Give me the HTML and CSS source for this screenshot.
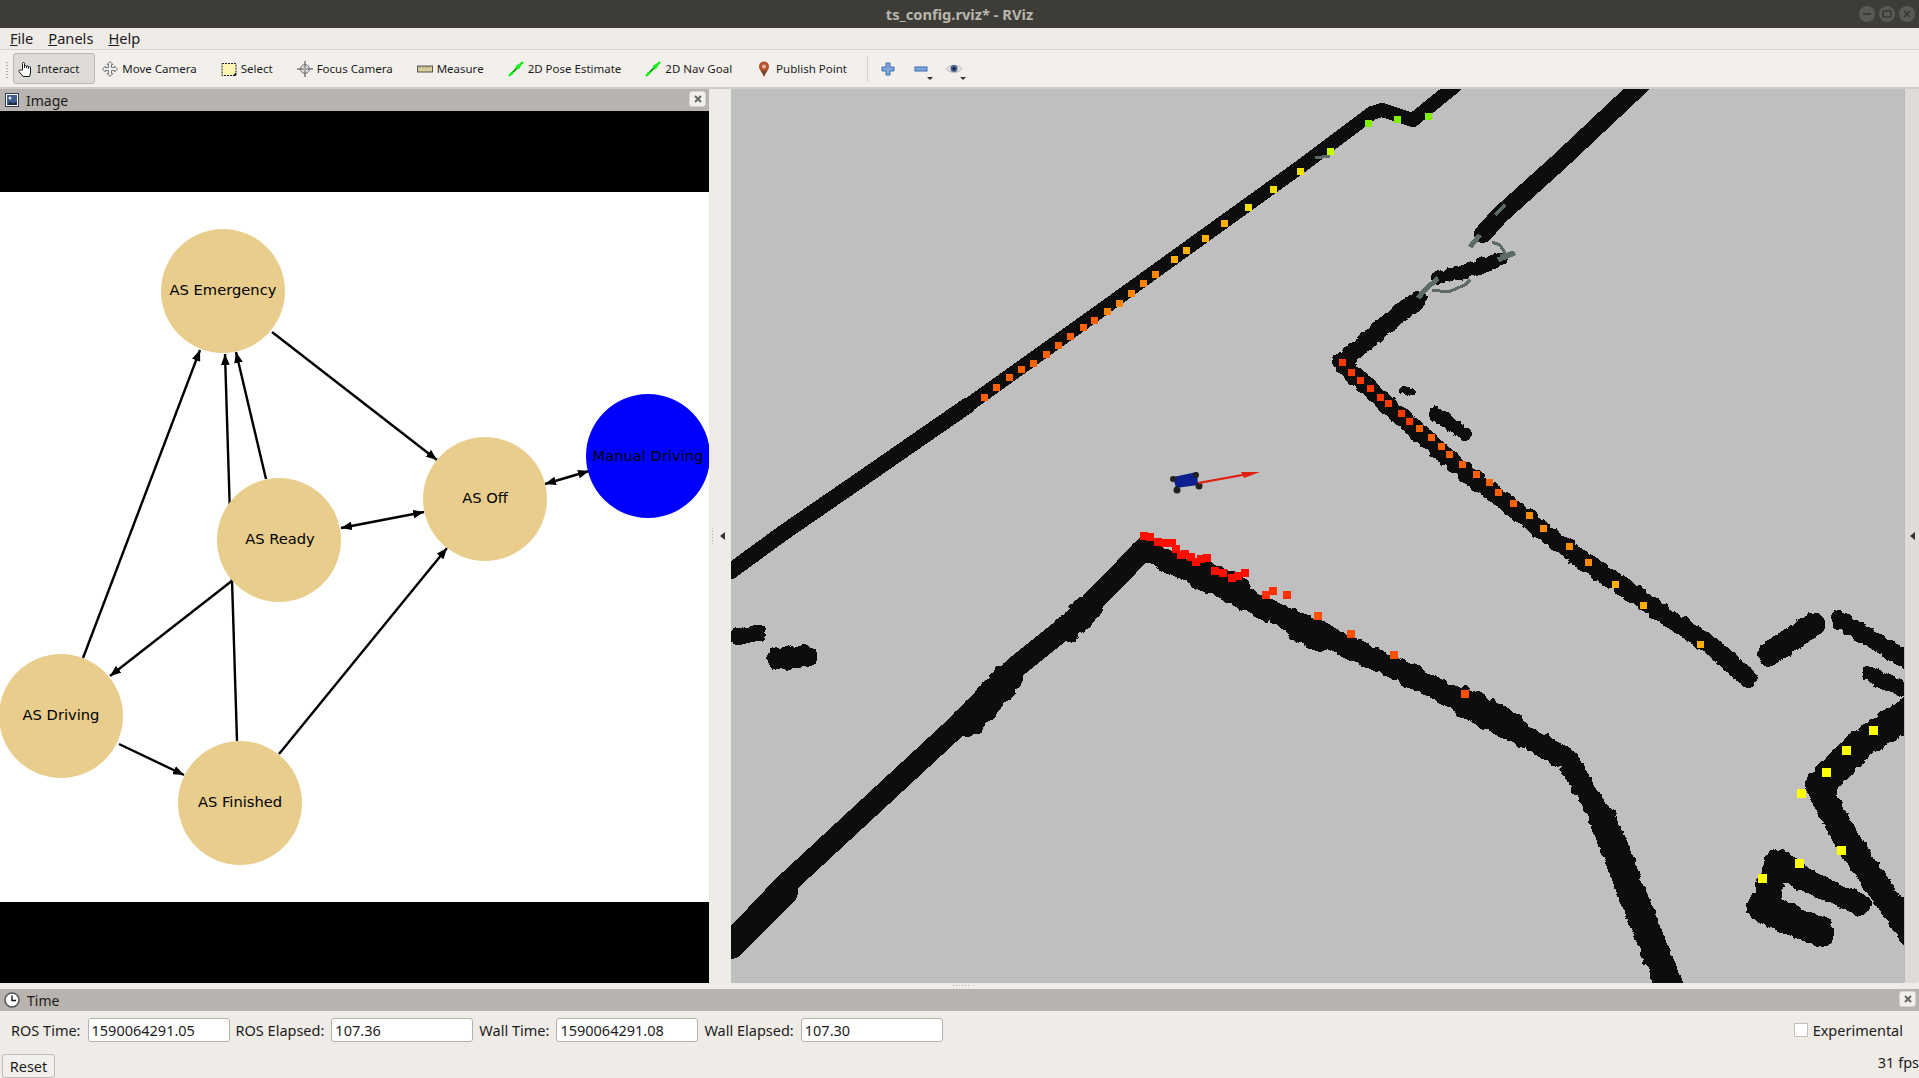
FILE: index.html
```html
<!DOCTYPE html>
<html>

<head>
    <title>ts_config.rviz* - RViz</title>
    <link rel="stylesheet" href="styles.css">
</head>

<body>

    <div class="titlebar">
        <span class="title-text">ts_config.rviz* - RViz</span>
        <div class="win-buttons">
            <svg class="win-btn" viewBox="0 0 16 16"><circle cx="8" cy="8" r="8" fill="#5a5955"/><path d="M4 8h8" stroke="#33322e" stroke-width="1.4"/></svg>
            <svg class="win-btn" viewBox="0 0 16 16"><circle cx="8" cy="8" r="8" fill="#5a5955"/><rect x="4" y="5" width="8" height="6" fill="none" stroke="#33322e" stroke-width="1.2"/></svg>
            <svg class="win-btn" viewBox="0 0 16 16"><circle cx="8" cy="8" r="8" fill="#5a5955"/><path d="M5 5l6 6M11 5l-6 6" stroke="#33322e" stroke-width="1.3"/></svg>
        </div>
    </div>

    <div class="menubar">
        <span class="menu-item"><u>F</u>ile</span>
        <span class="menu-item"><u>P</u>anels</span>
        <span class="menu-item"><u>H</u>elp</span>
    </div>

    <div class="toolbar">
        <div class="grip"></div>
        <div class="tool active">
            <svg class="icon" viewBox="0 0 16 16"><path d="M4.500 9V2.500a1 1 0 0 1 2 0V7 5.500a1 1 0 0 1 2 0V7 6a1 1 0 0 1 2 0v1.500-.8a1 1 0 0 1 2 0V12l-1 3.500H5L1 10.500c-.7-1 .8-2.200 1.800-1.200z" fill="#fff" stroke="#1a1a1a" stroke-width="1"/></svg>
            <span>Interact</span>
        </div>
        <div class="tool">
            <svg class="icon" viewBox="0 0 16 16"><path d="M8 .5l3 3H9.500v3h3V5l3 3-3 3V9.500h-3v3H11l-3 3-3-3h1.500v-3h-3V11l-3-3 3-3v1.500h3v-3H5z" fill="#eee" stroke="#777" stroke-width="1"/></svg>
            <span>Move Camera</span>
        </div>
        <div class="tool">
            <svg class="icon" viewBox="0 0 16 16"><rect x="1" y="2.500" width="14" height="12" fill="#fbf6b4" stroke="#222" stroke-dasharray="2 1"/><path d="M12 14.500l3-3v3z" fill="#000"/></svg>
            <span>Select</span>
        </div>
        <div class="tool">
            <svg class="icon" viewBox="0 0 16 16"><circle cx="8" cy="8" r="4.500" fill="#ddd" stroke="#777"/><path d="M8 0v16M0 8h16" stroke="#777" stroke-width="1.500"/><path d="M8 5v6M5 8h6" stroke="#bbb"/></svg>
            <span>Focus Camera</span>
        </div>
        <div class="tool">
            <svg class="icon" viewBox="0 0 16 16"><rect x=".5" y="5" width="15" height="6" fill="#d8cc9a" stroke="#555"/><path d="M3 5v2M6 5v2M9 5v2M12 5v2" stroke="#777"/></svg>
            <span>Measure</span>
        </div>
        <div class="tool">
            <svg class="icon" viewBox="0 0 16 16"><path d="M1 15L15 1" stroke="#00e000" stroke-width="2"/><path d="M15 .5L7.500 5l3.500 3.500z" fill="#19f019"/><path d="M1 15l4-1.500-2.500-2.500z" fill="#19f019"/><path d="M5 11l4-4" stroke="#116611" stroke-width="1"/></svg>
            <span>2D Pose Estimate</span>
        </div>
        <div class="tool">
            <svg class="icon" viewBox="0 0 16 16"><path d="M1 15L15 1" stroke="#00e000" stroke-width="2"/><path d="M15 .5L7.500 5l3.500 3.500z" fill="#19f019"/><path d="M1 15l4-1.500-2.500-2.500z" fill="#19f019"/><path d="M5 11l4-4" stroke="#116611" stroke-width="1"/></svg>
            <span>2D Nav Goal</span>
        </div>
        <div class="tool">
            <svg class="icon" viewBox="0 0 16 16"><path d="M8 16C6 11 3 9 3 5.500a5 5 0 0 1 10 0C13 9 10 11 8 16z" fill="#b5502c"/><path d="M8 15.500c-1-3-2-4-3-6h6c-1 2-2 3-3 6z" fill="#6d4a32"/><circle cx="8" cy="5.500" r="2" fill="#e8b9a0"/></svg>
            <span>Publish Point</span>
        </div>
        <div class="tool-sep"></div>
        <div class="tool-mini">
            <svg class="icon" viewBox="0 0 16 16"><path d="M6 2h4v4h4v4h-4v4H6v-4H2V6h4z" fill="#7fa6d8" stroke="#3c6eb0"/></svg>
        </div>
        <div class="tool-mini">
            <svg class="icon" viewBox="0 0 16 16"><rect x="2" y="6" width="12" height="4" fill="#7fa6d8" stroke="#3c6eb0"/></svg>
            <span class="drop"></span>
        </div>
        <div class="tool-mini">
            <svg class="icon" viewBox="0 0 16 16"><path d="M0 8c4-5 12-5 16 0-4 4.500-12 4.500-16 0z" fill="#e4e4e4" stroke="#aaa" stroke-width=".8"/><circle cx="8" cy="7.500" r="3.500" fill="#4a5f8e"/><circle cx="8" cy="7.500" r="1.500" fill="#14203e"/></svg>
            <span class="drop"></span>
        </div>
    </div>

    <div class="main">
        <div class="panel-left">
            <div class="dock-title">
                <svg class="icon-title" viewBox="0 0 14 14"><rect x=".5" y=".5" width="13" height="13" fill="#fff" stroke="#2e3b5e"/><rect x="2" y="2" width="10" height="10" fill="#3e5c8c"/><circle cx="5" cy="5" r="1.500" fill="#e6e6d0"/><path d="M2 12l3-3 3 1 4-1v3z" fill="#1e2a44"/></svg>
                <span class="dock-name">Image</span>
                <span class="dock-close"><svg viewBox="0 0 8 8"><path d="M1 1l6 6M7 1l-6 6" stroke="#666" stroke-width="2"/></svg></span>
            </div>
            <div class="image-view">
                <svg class="graph" viewBox="0 192 709 710">
                    <defs>
                        <marker id="head" viewBox="0 0 10 8" refX="10" refY="4" markerWidth="11" markerHeight="9" markerUnits="userSpaceOnUse" orient="auto-start-reverse">
                            <path d="M0 0L10 4L0 8z" fill="#000"/>
                        </marker>
                    </defs>
                    <g class="edges">
                        <line x1="272" y1="332" x2="437" y2="460" marker-end="url(#head)"/>
                        <line x1="266" y1="479" x2="236" y2="352" marker-end="url(#head)"/>
                        <line x1="237" y1="741" x2="225" y2="354" marker-end="url(#head)"/>
                        <line x1="83" y1="658" x2="200" y2="350" marker-end="url(#head)"/>
                        <line x1="341" y1="528" x2="424" y2="512" marker-start="url(#head)" marker-end="url(#head)"/>
                        <line x1="545" y1="484" x2="589" y2="471" marker-start="url(#head)" marker-end="url(#head)"/>
                        <line x1="233" y1="580" x2="110" y2="676" marker-end="url(#head)"/>
                        <line x1="119" y1="744" x2="184" y2="775" marker-end="url(#head)"/>
                        <line x1="279" y1="754" x2="447" y2="548" marker-end="url(#head)"/>
                    </g>
                    <circle class="node" cx="223" cy="291" r="62"/>
                    <circle class="node" cx="485" cy="499" r="62"/>
                    <circle class="node-on" cx="648" cy="456" r="62"/>
                    <circle class="node" cx="279" cy="540" r="62"/>
                    <circle class="node" cx="61" cy="716" r="62"/>
                    <circle class="node" cx="240" cy="803" r="62"/>
                    <text class="label" x="223" y="289">AS Emergency</text>
                    <text class="label" x="485" y="497">AS Off</text>
                    <text class="label" x="648" y="455">Manual Driving</text>
                    <text class="label" x="280" y="538">AS Ready</text>
                    <text class="label" x="61" y="714">AS Driving</text>
                    <text class="label" x="240" y="801">AS Finished</text>
                </svg>
            </div>
        </div>

        <div class="splitter">
            <span class="tri-left"></span>
        </div>

        <div class="view-3d">
            <svg class="map" viewBox="731 89 1173 894">
                <defs>
                    <filter id="rough" x="-5%" y="-5%" width="110%" height="110%" color-interpolation-filters="sRGB">
                        <feTurbulence type="fractalNoise" baseFrequency="0.13" numOctaves="2" seed="4"/>
                        <feDisplacementMap in="SourceGraphic" scale="7" xChannelSelector="R" yChannelSelector="G"/>
                    </filter>
                </defs>
                <!-- long clean walls -->
                <g class="wall">
                    <polyline class="w16" points="731,571 783,533 860,480 967,406"/>
                    <polyline class="w14" points="967,406 1100,311 1300,167 1372,113 1382,110 1413,120 1455,86"/>
                    <polyline class="w18" points="1642,84 1560,161 1500,215 1483,234"/>
                    <polyline class="w20" points="731,942 783,887 955,728 1016,667 1077,618 1144,549"/>
                    <polyline class="w26" points="731,946 785,892"/>
                </g>
                <!-- rough walls -->
                <g class="wall" filter="url(#rough)">
                    <polyline class="w14" points="1438,278 1460,273 1500,260"/>
                    <polyline class="w30" points="968,722 1008,678"/>
                    <polyline class="w28" points="1068,628 1088,608"/>
                    <polyline class="w18" points="1418,300 1395,317 1377,333 1341,363"/>
                    <polyline class="w18" points="1341,363 1399,415 1467,474 1577,556 1711,646 1748,678"/>
                    <polyline class="w14" points="1436,414 1465,434"/>
                    <polyline class="w8" points="1402,390 1412,392"/>
                    <polyline class="w22" points="1144,549 1225,590 1420,680 1567,759 1603,820"/>
                    <polyline class="w28" points="1603,820 1670,988"/>
                    <polyline class="w30" points="1205,576 1235,590"/>
                    <polyline class="w30" points="1300,628 1320,636"/>
                    <polyline class="w30" points="1465,702 1510,726"/>
                    <polyline class="w18" points="738,636 758,634"/>
                    <polyline class="w22" points="778,659 806,656"/>
                    <polyline class="w24" points="1769,654 1813,625"/>
                    <polyline class="w18" points="1840,620 1910,662"/>
                    <polyline class="w16" points="1870,674 1910,692"/>
                    <polyline class="w30" points="1910,712 1860,745 1820,785"/>
                    <polyline class="w26" points="1820,790 1850,845 1910,932"/>
                    <polyline class="w22" points="1860,905 1800,877"/>
                    <polyline class="w26" points="1800,877 1778,862 1762,908"/>
                    <polyline class="w30" points="1762,908 1820,932"/>
                </g>
                <g class="scan">
                    <polyline class="g3" points="1480,235 1470,247"/>
                    <polyline class="g3" points="1498,260 1510,255 1515,253"/>
                    <polyline class="g3" points="1438,278 1425,290 1418,298"/>
                    <polyline class="g2" points="1432,290 1448,292 1465,285 1470,280"/>
                    <polyline class="g2" points="1492,242 1500,245 1505,253"/>
                    <polyline class="g2" points="1330,156 1315,158"/>
                    <polyline class="g2" points="1495,215 1505,205"/>
                    <polyline class="g2" points="1500,256 1514,252"/>
                </g>
                <g class="marks small" fill="#ff6000">
                    <rect x="981" y="394"/><rect x="993" y="384"/><rect x="1006" y="374"/><rect x="1018" y="366"/><rect x="1030" y="360"/>
                    <rect x="1043" y="351"/><rect x="1055" y="342"/><rect x="1067" y="333"/><rect x="1080" y="324"/><rect x="1091" y="317"/>
                </g>
                <g class="marks small" fill="#ff8400">
                    <rect x="1104" y="308"/><rect x="1116" y="300"/><rect x="1128" y="290"/><rect x="1140" y="280"/><rect x="1152" y="271"/>
                </g>
                <g class="marks small" fill="#ffb000">
                    <rect x="1171" y="256"/><rect x="1183" y="247"/><rect x="1202" y="235"/><rect x="1221" y="220"/>
                </g>
                <g class="marks small" fill="#f0e000">
                    <rect x="1245" y="204"/><rect x="1270" y="186"/><rect x="1297" y="168"/>
                </g>
                <g class="marks small" fill="#c4ff00">
                    <rect x="1327" y="148"/>
                </g>
                <g class="marks small" fill="#80f000">
                    <rect x="1365" y="120"/><rect x="1394" y="116"/><rect x="1425" y="113"/>
                </g>
                <g class="marks small" fill="#ff3c00">
                    <rect x="1339" y="359"/><rect x="1348" y="369"/><rect x="1357" y="377"/><rect x="1367" y="385"/><rect x="1377" y="394"/>
                    <rect x="1385" y="400"/><rect x="1398" y="410"/><rect x="1406" y="418"/>
                </g>
                <g class="marks small" fill="#ff6000">
                    <rect x="1416" y="425"/><rect x="1428" y="434"/><rect x="1438" y="443"/><rect x="1446" y="451"/><rect x="1459" y="461"/>
                    <rect x="1473" y="471"/><rect x="1486" y="479"/><rect x="1495" y="489"/><rect x="1510" y="500"/>
                </g>
                <g class="marks small" fill="#ff8c00">
                    <rect x="1526" y="512"/><rect x="1540" y="525"/><rect x="1566" y="543"/><rect x="1585" y="559"/>
                </g>
                <g class="marks small" fill="#ffb000">
                    <rect x="1612" y="581"/><rect x="1640" y="602"/><rect x="1697" y="641"/>
                </g>
                <g class="marks" fill="#ff0d00">
                    <rect x="1140" y="532"/><rect x="1146" y="533"/><rect x="1154" y="538"/><rect x="1161" y="539"/><rect x="1168" y="539"/><rect x="1172" y="545"/>
                    <rect x="1177" y="551"/><rect x="1181" y="550"/><rect x="1187" y="553"/><rect x="1192" y="558"/><rect x="1197" y="555"/><rect x="1203" y="554"/>
                    <rect x="1211" y="567"/><rect x="1219" y="569"/><rect x="1228" y="574"/><rect x="1234" y="572"/><rect x="1241" y="569"/>
                </g>
                <g class="marks" fill="#ff3000">
                    <rect x="1262" y="591"/><rect x="1269" y="587"/><rect x="1283" y="591"/>
                </g>
                <g class="marks" fill="#ff5000">
                    <rect x="1314" y="612"/><rect x="1347" y="630"/><rect x="1390" y="651"/><rect x="1461" y="690"/>
                </g>
                <g class="marks big" fill="#ffff00">
                    <rect x="1797" y="789"/><rect x="1822" y="768"/><rect x="1842" y="746"/><rect x="1869" y="726"/><rect x="1837" y="846"/><rect x="1795" y="859"/><rect x="1758" y="874"/>
                </g>
                <polygon class="car" points="1173,477 1197,472 1198,485 1176,488"/>
                <g class="wheel">
                    <circle cx="1173" cy="479" r="3"/><circle cx="1177" cy="490" r="3.500"/><circle cx="1199" cy="486" r="3.500"/><circle cx="1196" cy="475" r="3"/>
                </g>
                <polygon class="arrow" points="1198,482 1242,474 1241,472 1260,472 1244,478 1243,476 1199,484"/>
            </svg>
        </div>

        <div class="side-handle">
            <span class="tri-left"></span>
        </div>
    </div>

    <div class="time-panel">
        <div class="dock-title">
            <svg class="icon-title" viewBox="0 0 16 16"><circle cx="8" cy="8" r="7" fill="#fff" stroke="#555" stroke-width="1.500"/><path d="M8 3.500V8.500H12" fill="none" stroke="#111" stroke-width="1.400"/></svg>
            <span class="dock-name">Time</span>
            <span class="dock-close"><svg viewBox="0 0 8 8"><path d="M1 1l6 6M7 1l-6 6" stroke="#666" stroke-width="2"/></svg></span>
        </div>
        <div class="time-row">
            <label>ROS Time:</label>
            <div class="field">1590064291.05</div>
            <label>ROS Elapsed:</label>
            <div class="field">107.36</div>
            <label>Wall Time:</label>
            <div class="field">1590064291.08</div>
            <label>Wall Elapsed:</label>
            <div class="field">107.30</div>
            <div class="experimental">
                <span class="check"></span>
                <span>Experimental</span>
            </div>
        </div>
        <div class="bottom-row">
            <div class="reset">Reset</div>
            <span class="fps">31 fps</span>
        </div>
    </div>

</body>

</html>
```

FILE: styles.css
```css
* {
    box-sizing: border-box;
}

html, body {
    margin: 0;
    padding: 0;
}

body {
    width: 1919px;
    height: 1078px;
    overflow: hidden;
    display: flex;
    flex-direction: column;
    font-family: "Noto Sans", sans-serif;
    font-size: 14px;
    color: #1c1c1c;
    background-color: #efebe7;
}

.titlebar {
    height: 28px;
    flex: none;
    background-color: #3d3c37;
    display: flex;
    align-items: center;
    justify-content: center;
    position: relative;
}

.title-text {
    color: #b9b6ad;
    font-size: 14.700px;
    font-weight: 700;
}

.win-buttons {
    position: absolute;
    right: 4px;
    top: 6px;
    display: flex;
    gap: 4px;
}

.win-btn {
    width: 16px;
    height: 16px;
}

.menubar {
    height: 22px;
    flex: none;
    display: flex;
    align-items: center;
    gap: 15px;
    padding: 0 0 2px 10px;
    font-size: 14.600px;
    border-bottom: 1px solid #d6d2cd;
}

.toolbar {
    height: 39px;
    flex: none;
    display: flex;
    align-items: center;
    padding-left: 13px;
    font-size: 11.500px;
    position: relative;
    background-color: #f3f0ec;
    border-bottom: 2px solid #cfcbc6;
}

.grip {
    position: absolute;
    left: 6px;
    top: 11px;
    width: 2px;
    height: 17px;
    background-image: radial-gradient(#aaa 40%, transparent 45%);
    background-size: 2px 3px;
}

.tool {
    height: 31px;
    display: flex;
    align-items: center;
    gap: 4px;
    padding: 0 17px 0 5px;
    border: 1px solid transparent;
    border-radius: 3px;
}

.tool.active {
    background-color: #dedbd7;
    border-color: #bab7b2;
    gap: 3px;
    padding: 0 15px 0 4px;
    margin-right: 1px;
}

.icon {
    width: 16px;
    height: 16px;
    flex: none;
}

.tool-sep {
    width: 1px;
    height: 26px;
    background-color: #d6d2cd;
    margin: 0 12px 0 2px;
}

.tool-mini {
    width: 33px;
    height: 31px;
    display: flex;
    align-items: center;
    position: relative;
}

.drop {
    position: absolute;
    left: 14px;
    top: 24px;
    border-left: 3px solid transparent;
    border-right: 3px solid transparent;
    border-top: 3px solid #333;
}

.main {
    height: 894px;
    flex: none;
    display: flex;
}

.panel-left {
    width: 709px;
    flex: none;
    display: flex;
    flex-direction: column;
}

.dock-title {
    height: 22px;
    flex: none;
    background-color: #b8b3ae;
    display: flex;
    align-items: center;
    padding-left: 5px;
    position: relative;
    font-size: 14px;
}

.icon-title {
    width: 14px;
    height: 14px;
    flex: none;
}

.dock-name {
    margin-left: 7px;
}

.dock-close {
    position: absolute;
    right: 3px;
    top: 2px;
    width: 17px;
    height: 16px;
    background-color: #f2f0ed;
    border: 1px solid #d6d2cd;
    border-radius: 3px;
    display: flex;
    align-items: center;
    justify-content: center;
}

.dock-close svg {
    width: 8px;
    height: 8px;
}

.image-view {
    flex: 1;
    background-color: #000;
    display: flex;
    align-items: center;
}

.graph {
    width: 709px;
    height: 710px;
    display: block;
    background-color: #fff;
}

.edges line {
    stroke: #000;
    stroke-width: 2.400;
}

.node {
    fill: #e8cd8c;
}

.node-on {
    fill: #0000ff;
}

.label {
    font-family: "DejaVu Sans", sans-serif;
    font-size: 14.700px;
    fill: #000;
    text-anchor: middle;
    dominant-baseline: central;
}

.splitter {
    width: 22px;
    flex: none;
    display: flex;
    align-items: center;
    justify-content: center;
    position: relative;
}

.splitter::before {
    content: "";
    position: absolute;
    left: 3px;
    top: 439px;
    width: 1px;
    height: 18px;
    background-image: linear-gradient(#b5b2ad 40%, transparent 40%);
    background-size: 1px 3px;
}

.splitter .tri-left {
    margin-left: 5px;
}

.tri-left {
    width: 0;
    height: 0;
    border-top: 4px solid transparent;
    border-bottom: 4px solid transparent;
    border-right: 5px solid #333;
}

.view-3d {
    width: 1173px;
    flex: none;
    background-color: #bfbfbf;
}

.map {
    width: 1173px;
    height: 894px;
    display: block;
}

.wall polyline {
    fill: none;
    stroke: #0d0d0d;
    stroke-linejoin: round;
    stroke-linecap: round;
    shape-rendering: crispEdges;
}

.w8 { stroke-width: 8; }
.w14 { stroke-width: 14; }
.w16 { stroke-width: 16; }
.w18 { stroke-width: 18; }
.w20 { stroke-width: 22; }
.w22 { stroke-width: 22; }
.w24 { stroke-width: 24; }
.w26 { stroke-width: 26; }
.w28 { stroke-width: 28; }
.w30 { stroke-width: 30; }

.scan polyline {
    fill: none;
    stroke: #5c6b68;
    shape-rendering: crispEdges;
}

.g2 { stroke-width: 3; }
.g3 { stroke-width: 5; }

.marks rect {
    width: 8px;
    height: 8px;
    shape-rendering: crispEdges;
}

.marks.small rect {
    width: 7px;
    height: 7px;
}

.marks.big rect {
    width: 9px;
    height: 9px;
}

.car {
    fill: #0b1f8e;
}

.wheel circle {
    fill: #222;
}

.arrow {
    fill: #e0200c;
}

.side-handle {
    width: 15px;
    flex: none;
    display: flex;
    align-items: center;
    justify-content: center;
    background-color: #dfdcd8;
    border-left: 1px solid #bdbab5;
    border-radius: 0 0 3px 3px;
    margin-right: 1px;
}

.time-panel {
    flex: 1;
    margin-top: 6px;
    display: flex;
    flex-direction: column;
    position: relative;
}

.time-panel::before {
    content: "";
    position: absolute;
    left: 953px;
    top: -4px;
    width: 17px;
    height: 1px;
    background-image: linear-gradient(90deg, #b5b2ad 40%, transparent 40%);
    background-size: 3px 1px;
}

.time-panel .icon-title {
    width: 16px;
    height: 16px;
    margin-left: -1px;
}

.time-panel .dock-name {
    margin-left: 7px;
}

.time-row {
    height: 24px;
    flex: none;
    margin-top: 7px;
    display: flex;
    align-items: center;
    padding: 0 16px 0 11px;
    font-size: 14.500px;
}

.field {
    width: 142px;
    height: 24px;
    margin: 0 6px 0 7px;
    padding-left: 3px;
    background-color: #fff;
    border: 1px solid #b5b2ad;
    border-radius: 3px;
    line-height: 22px;
    flex: none;
}

.experimental {
    margin-left: auto;
    display: flex;
    align-items: center;
    gap: 5px;
}

.check {
    width: 14px;
    height: 14px;
    background-color: #fff;
    border: 1px solid #c4c1bc;
}

.bottom-row {
    height: 24px;
    flex: none;
    margin-top: 12px;
    padding-left: 2px;
    display: flex;
    justify-content: space-between;
    align-items: flex-start;
    font-size: 14.500px;
}

.reset {
    width: 53px;
    height: 24px;
    text-align: center;
    line-height: 22px;
    border: 1px solid #c0bdb8;
    border-radius: 3px;
    background-color: #f2f0ed;
}

.fps {
    line-height: 16px;
}
```
